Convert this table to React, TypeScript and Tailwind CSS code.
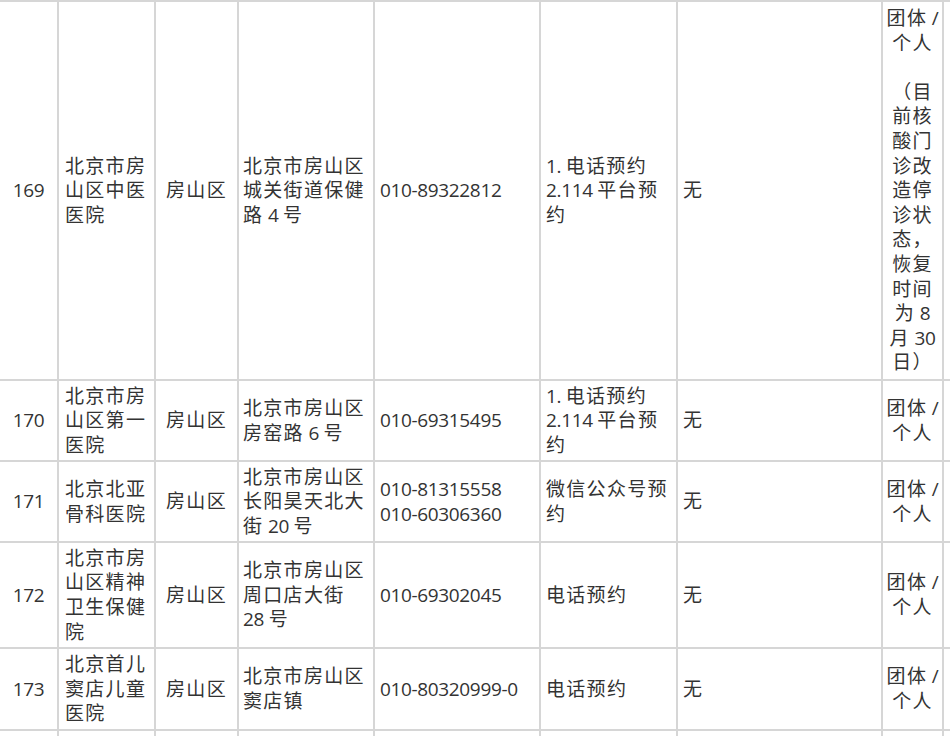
import React from 'react'

type Row = {
  no: string
  name: string[]
  district: string
  addr: string[]
  phone: string[]
  method: string[]
  extra: string
  kind: string[]
  h: string
}

const rows: Row[] = [
  {
    no: '169',
    name: ['北京市房', '山区中医', '医院'],
    district: '房山区',
    addr: ['北京市房山区', '城关街道保健', '路 4 号'],
    phone: ['010-89322812'],
    method: ['1. 电话预约', '2.114 平台预', '约'],
    extra: '无',
    kind: ['团体 /', '个人', '', '（目', '前核', '酸门', '诊改', '造停', '诊状', '态，', '恢复', '时间', '为 8', '月 30', '日）'],
    h: 'h-[379px]',
  },
  {
    no: '170',
    name: ['北京市房', '山区第一', '医院'],
    district: '房山区',
    addr: ['北京市房山区', '房窑路 6 号'],
    phone: ['010-69315495'],
    method: ['1. 电话预约', '2.114 平台预', '约'],
    extra: '无',
    kind: ['团体 /', '个人'],
    h: 'h-[81px]',
  },
  {
    no: '171',
    name: ['北京北亚', '骨科医院'],
    district: '房山区',
    addr: ['北京市房山区', '长阳昊天北大', '街 20 号'],
    phone: ['010-81315558', '010-60306360'],
    method: ['微信公众号预', '约'],
    extra: '无',
    kind: ['团体 /', '个人'],
    h: 'h-[81px]',
  },
  {
    no: '172',
    name: ['北京市房', '山区精神', '卫生保健', '院'],
    district: '房山区',
    addr: ['北京市房山区', '周口店大街', '28 号'],
    phone: ['010-69302045'],
    method: ['电话预约'],
    extra: '无',
    kind: ['团体 /', '个人'],
    h: 'h-[106px]',
  },
  {
    no: '173',
    name: ['北京首儿', '窦店儿童', '医院'],
    district: '房山区',
    addr: ['北京市房山区', '窦店镇'],
    phone: ['010-80320999-0'],
    method: ['电话预约'],
    extra: '无',
    kind: ['团体 /', '个人'],
    h: 'h-[82px]',
  },
]

function Txt({ s }: { s: string }) {
  const parts = s.match(/[\x00-\x7F]+|[^\x00-\x7F]+/g) || []
  return (
    <>
      {parts.map((p, i) =>
        /^[\x00-\x7F]+$/.test(p) ? (
          <span key={i} className="tracking-[-0.35px]">{p}</span>
        ) : (
          <span key={i}>{p}</span>
        )
      )}
    </>
  )
}

function Lines({ lines }: { lines: string[] }) {
  return (
    <div>
      {lines.map((l, i) => (
        <div key={i} className="whitespace-nowrap h-[24.6px]">
          <Txt s={l} />
        </div>
      ))}
    </div>
  )
}

const cell = 'box-border border-r-2 border-[#d6d6d6] flex items-center shrink-0'

export default function App() {
  return (
    <div
      className="w-[950px] h-[736px] overflow-hidden bg-white text-[#333] text-[19px] leading-[24.6px] tracking-[1.3px]"
      style={{ fontFamily: '"Open Sans", "Noto Sans CJK SC", sans-serif' }}
    >
      <div className="border-t-2 border-[#d6d6d6]">
        {rows.map((r) => (
          <div key={r.no} className={`flex box-border border-b-2 border-[#d6d6d6] ${r.h}`}>
            <div className={`${cell} w-[59px] justify-center`}>
              <Txt s={r.no} />
            </div>
            <div className={`${cell} w-[97px] pl-[6px]`}>
              <Lines lines={r.name} />
            </div>
            <div className={`${cell} w-[83px] justify-center`}>
              <Lines lines={[r.district]} />
            </div>
            <div className={`${cell} w-[136px] pl-[4px]`}>
              <Lines lines={r.addr} />
            </div>
            <div className={`${cell} w-[166px] pl-[5px]`}>
              <Lines lines={r.phone} />
            </div>
            <div className={`${cell} w-[137px] pl-[5px]`}>
              <Lines lines={r.method} />
            </div>
            <div className={`${cell} w-[205px] pl-[5px]`}>
              <Lines lines={[r.extra]} />
            </div>
            <div className={`${cell} w-[61px] justify-center text-center`}>
              <Lines lines={r.kind} />
            </div>
            <div className="flex-1" />
          </div>
        ))}
        <div className="flex h-[40px]">
          <div className={`${cell} w-[59px]`} />
          <div className={`${cell} w-[97px]`} />
          <div className={`${cell} w-[83px]`} />
          <div className={`${cell} w-[136px]`} />
          <div className={`${cell} w-[166px]`} />
          <div className={`${cell} w-[137px]`} />
          <div className={`${cell} w-[205px]`} />
          <div className={`${cell} w-[61px]`} />
          <div className="flex-1" />
        </div>
      </div>
    </div>
  )
}
